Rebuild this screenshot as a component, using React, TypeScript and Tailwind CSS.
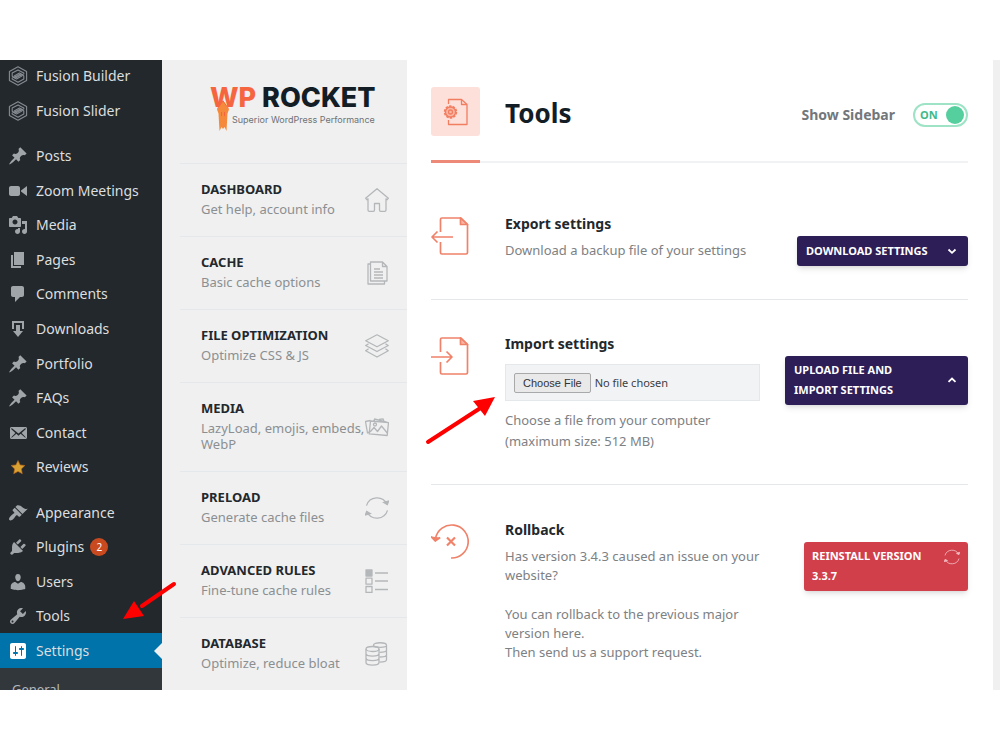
import type { ReactNode } from 'react';

const dashicons = {
  pin: 'M10.44 3.02l1.82-1.82 6.36 6.35-1.83 1.82c-1.05-.68-2.48-.57-3.41.36l-.75.75c-.92.93-1.04 2.35-.35 3.41l-1.83 1.82-2.41-2.41-2.8 2.79c-.42.42-3.38 2.71-3.8 2.29s1.86-3.39 2.28-3.81l2.79-2.79L4.1 9.36l1.83-1.82c1.05.69 2.48.57 3.4-.36l.75-.75c.93-.92 1.05-2.35.36-3.41z',
  video: 'M12 13V7c0-1.1-.9-2-2-2H3c-1.1 0-2 .9-2 2v6c0 1.1.9 2 2 2h7c1.1 0 2-.9 2-2zm1-2.5l6 4.5V5l-6 4.5v1z',
  media: 'M13 11V4c0-.55-.45-1-1-1h-1.67L9 1H5L3.67 3H2c-.55 0-1 .45-1 1v7c0 .55.45 1 1 1h10c.55 0 1-.45 1-1zM7 4.5c1.38 0 2.5 1.12 2.5 2.5S8.38 9.5 7 9.5 4.5 8.38 4.5 7 5.62 4.5 7 4.5zM14 6h5v10.5c0 1.38-1.12 2.5-2.5 2.5S14 17.88 14 16.5s1.12-2.5 2.5-2.5c.17 0 .34.02.5.05V9h-3V6zm-4 8.05V13h2v3.5c0 1.38-1.12 2.5-2.5 2.5S7 17.88 7 16.5 8.12 14 9.5 14c.17 0 .34.02.5.05z',
  page: 'M6 15V2h10v13H6zm-1 1h8v2H3V5h2v11z',
  comment: 'M5 2h9c1.1 0 2 .9 2 2v7c0 1.1-.9 2-2 2h-2l-5 5v-5H5c-1.1 0-2-.9-2-2V4c0-1.1.9-2 2-2z',
  download: 'M14.01 4v6h2V2H4v8h2.01V4h8zm-2 2v6h3l-5 6-5-6h3V6h4z',
  email: 'M19 14.5v-9c0-.83-.67-1.5-1.5-1.5H3.49c-.83 0-1.5.67-1.5 1.5v9c0 .83.67 1.5 1.5 1.5H17.5c.83 0 1.5-.67 1.5-1.5zm-1.31-9.11c.33.33.15.67-.03.84L13.6 9.95l3.9 4.06c.12.14.2.36.06.51-.13.16-.43.15-.56.05l-4.37-3.73-2.14 1.95-2.13-1.95-4.37 3.73c-.13.1-.43.11-.56-.05-.14-.15-.06-.37.06-.51l3.9-4.06-4.06-3.72c-.18-.17-.36-.51-.03-.84s.67-.17.95.07l6.24 5.04 6.25-5.04c.28-.24.62-.4.95-.07z',
  star: 'M10 3.500l2.100 4.400 4.800.6-3.500 3.400.9 4.800-4.300-2.300-4.300 2.300.9-4.800L3.100 8.500l4.800-.6z',
  appearance: 'M14.48 11.06L7.41 3.99l1.5-1.5c.5-.56 2.3-.47 3.51.32 1.21.8 1.43 1.28 2.91 2.1 1.18.64 2.45 1.26 4.45.85zm-.71.71L6.7 4.7 4.93 6.47c-.39.39-.39 1.02 0 1.41l1.06 1.06c.39.39.39 1.03 0 1.42-.6.6-1.43 1.11-2.21 1.69-.35.26-.7.53-1.01.84C1.43 14.23.4 16.08 1.4 17.07c.99 1 2.84-.03 4.18-1.36.31-.31.58-.66.85-1.02.57-.78 1.08-1.61 1.69-2.21.39-.39 1.02-.39 1.41 0l1.06 1.06c.39.39 1.02.39 1.41 0z',
  plugins: 'M13.11 4.36L9.87 7.6 8 5.73l3.24-3.24c.35-.34 1.05-.2 1.56.32.52.51.66 1.21.31 1.55zm-8 1.77l.91-1.12 9.01 9.01-1.19.84c-.71.71-2.63 1.16-3.82 1.16H6.14L4.9 17.26c-.59.59-1.54.59-2.12 0-.59-.58-.59-1.53 0-2.12l1.24-1.24v-3.88c0-1.13.4-3.19 1.09-3.89zm7.26 3.97l3.24-3.24c.34-.35 1.04-.21 1.55.31.52.51.66 1.21.31 1.55l-3.24 3.25z',
  users: 'M10 9.25c-2.27 0-2.73-3.44-2.73-3.44C7 4.02 7.82 2 9.97 2c2.16 0 2.98 2.02 2.71 3.81 0 0-.41 3.44-2.68 3.44zm0 2.57L12.72 10c2.39 0 4.52 2.33 4.52 4.53v2.49s-3.65 1.13-7.24 1.13c-3.65 0-7.24-1.13-7.24-1.13v-2.49c0-2.25 1.94-4.48 4.47-4.48z',
  tools: 'M16.68 9.77c-1.34 1.34-3.3 1.67-4.95.99l-5.41 6.52c-.99.99-2.59.99-3.58 0s-.99-2.59 0-3.57l6.52-5.42c-.68-1.65-.35-3.61.99-4.95 1.28-1.28 3.12-1.62 4.72-1.06l-2.89 2.89 2.82 2.82 2.86-2.87c.53 1.58.18 3.39-1.08 4.65zM3.81 16.21c.4.39 1.04.39 1.43 0 .4-.4.4-1.04 0-1.43-.39-.4-1.03-.4-1.43 0-.39.39-.39 1.03 0 1.43z',
  settings: 'M18 16V4c0-1.1-.9-2-2-2H4c-1.1 0-2 .9-2 2v12c0 1.1.9 2 2 2h12c1.1 0 2-.9 2-2zM8 11h1c.55 0 1 .45 1 1s-.45 1-1 1H8v1.500c0 .28-.22.5-.5.5s-.5-.22-.5-.5V13H6c-.55 0-1-.45-1-1s.45-1 1-1h1V5.500c0-.28.22-.5.5-.5s.5.22.5.5V11zm5-2h-1c-.55 0-1-.45-1-1s.45-1 1-1h1V5.500c0-.28.22-.5.5-.5s.5.22.5.5V7h1c.55 0 1 .45 1 1s-.45 1-1 1h-1v5.500c0 .28-.22.5-.5.5s-.5-.22-.5-.5V9z',
};

type AdminItem = {
  name: string;
  icon: keyof typeof dashicons | 'fusion';
  count?: number;
  active?: boolean;
};

const adminGroups: AdminItem[][] = [
  [
    { name: 'Fusion Builder', icon: 'fusion' },
    { name: 'Fusion Slider', icon: 'fusion' },
  ],
  [
    { name: 'Posts', icon: 'pin' },
    { name: 'Zoom Meetings', icon: 'video' },
    { name: 'Media', icon: 'media' },
    { name: 'Pages', icon: 'page' },
    { name: 'Comments', icon: 'comment' },
    { name: 'Downloads', icon: 'download' },
    { name: 'Portfolio', icon: 'pin' },
    { name: 'FAQs', icon: 'pin' },
    { name: 'Contact', icon: 'email' },
    { name: 'Reviews', icon: 'star' },
  ],
  [
    { name: 'Appearance', icon: 'appearance' },
    { name: 'Plugins', icon: 'plugins', count: 2 },
    { name: 'Users', icon: 'users' },
    { name: 'Tools', icon: 'tools' },
    { name: 'Settings', icon: 'settings', active: true },
  ],
];

const AdminIcon = ({ icon }: { icon: AdminItem['icon'] }) => {
  if (icon === 'fusion') {
    return (
      <svg viewBox="0 0 20 20" className="w-5 h-5 shrink-0" fill="none" stroke="#858b91" strokeWidth="1.1" strokeLinejoin="round">
        <path d="M10 .8l8.600 4.700v9L10 19.200l-8.600-4.700v-9z" />
        <path d="M15.800 8.300V7L10 3.900 4.200 7v3.200l3.300 1.700 4.800-2.700 1.500.8-5.300 3-4.300-2.200" />
        <path d="M4.200 11.800V13l5.800 3.200 5.800-3.200V9.900l-3.300-1.800-4.800 2.700-1.500-.8 5.300-3 4.300 2.200" />
      </svg>
    );
  }
  const color = icon === 'star' ? 'text-[#d9a032]' : icon === 'settings' ? 'text-white' : 'text-[#a0a5aa]';
  return (
    <svg viewBox="0 0 20 20" className={`w-5 h-5 shrink-0 ${color}`} fill="currentColor">
      <path d={dashicons[icon]} stroke={icon === 'star' ? '#b8651b' : 'none'} strokeWidth=".6" />
    </svg>
  );
};

const AdminMenu = () => (
  <nav className="w-[162px] shrink-0 bg-[#23282d] flex flex-col overflow-hidden text-sm text-[#dcdedf]">
    <div className="-mt-px flex-1 flex flex-col gap-[11px]">
      {adminGroups.map((group) => (
        <ul key={group[0].name} className="flex flex-col" style={{ flexGrow: group.length }}>
          {group.map((item) => (
            <li key={item.name} className={`flex-1 flex ${item.active ? 'bg-[#0073aa]' : ''}`}>
              <a href="#" className="relative flex-1 flex items-center gap-2 pl-2">
                <AdminIcon icon={item.icon} />
                <span>{item.name}</span>
                {item.count && (
                  <span className="-ml-[2px] w-[18px] h-[18px] rounded-full bg-[#ca4a1f] text-white text-[10px] leading-[18px] text-center">
                    {item.count}
                  </span>
                )}
                {item.active && (
                  <span className="absolute right-0 border-y-8 border-y-transparent border-r-8 border-r-[#f0f0f0]" />
                )}
              </a>
            </li>
          ))}
        </ul>
      ))}
    </div>
    <div className="h-[22px] bg-[#32373c] pl-3 pt-3 overflow-hidden">
      <a href="#" className="block text-[13px] leading-[18px] text-[#b4b9be]">General</a>
    </div>
  </nav>
);

const SyncIcon = ({ className }: { className: string }) => (
  <svg viewBox="0 0 24 24" className={className} fill="none" stroke="currentColor" strokeWidth="1.300">
    <path d="M1.500 9.600A11 11 0 0 1 22 8.200M22.500 14.400A11 11 0 0 1 2 15.800" />
    <path d="M18.700 6.500l3.600 2 1.400-3.500zM5.300 17.500l-3.600-2L.3 19z" fill="currentColor" />
  </svg>
);

const OutlineIcon = ({ children }: { children: ReactNode }) => (
  <svg viewBox="0 0 24 24" className="w-6 h-6" fill="none" stroke="currentColor" strokeWidth="1.300" strokeLinejoin="round">
    {children}
  </svg>
);

const rocketItems = [
  {
    title: 'DASHBOARD',
    text: 'Get help, account info',
    icon: (
      <OutlineIcon>
        <path d="M12 .7L.6 10.200l1.200 1.500 1.200-.9V22c0 .8.500 1.300 1.300 1.300h4c.8 0 1.200-.4 1.200-1.200v-6.600h5v6.600c0 .8.4 1.200 1.200 1.200h4c.8 0 1.300-.5 1.300-1.300V10.800l1.200.9 1.200-1.500z" />
      </OutlineIcon>
    ),
  },
  {
    title: 'CACHE',
    text: 'Basic cache options',
    icon: (
      <OutlineIcon>
        <path d="M5.500 1h12l4.500 4.500V20H5.500zM17.500 1v4.500H22M5.500 3H3v20h16.500v-3M9 8h6M9 11h9M9 14h9M9 17h9" />
      </OutlineIcon>
    ),
  },
  {
    title: 'FILE OPTIMIZATION',
    text: 'Optimize CSS & JS',
    icon: (
      <OutlineIcon>
        <path d="M12 .8l11.300 6L12 12.800.7 6.800zM3.600 9.800L.7 11.500 12 17.500l11.300-6-2.900-1.700M3.600 14.800L.7 16.800 12 23l11.300-6.200-2.900-2" />
      </OutlineIcon>
    ),
  },
  {
    title: 'MEDIA',
    text: 'LazyLoad, emojis, embeds, WebP',
    icon: (
      <OutlineIcon>
        <path d="M5.500 6l18 1.600-1.300 12.900-18-1.600zM4.700 16.500L2.500 18 .5 6.500l5-1M9 6l.6-2 13 3.500M14 4.500l4-.7 1 2.700" />
        <path d="M5 17l4-4.500 3.500 4 4-5.500 5.800 7" />
        <circle cx="10" cy="9.500" r="1.500" />
      </OutlineIcon>
    ),
  },
  {
    title: 'PRELOAD',
    text: 'Generate cache files',
    icon: <SyncIcon className="w-6 h-6" />,
  },
  {
    title: 'ADVANCED RULES',
    text: 'Fine-tune cache rules',
    icon: (
      <OutlineIcon>
        <path d="M1 1h6v6H1z" fill="currentColor" />
        <path d="M1 9.200h6v6H1zM1 17.500h6v6H1zM10 4h13M10 12h13M10 20.500h13" />
      </OutlineIcon>
    ),
  },
  {
    title: 'DATABASE',
    text: 'Optimize, reduce bloat',
    icon: (
      <OutlineIcon>
        <ellipse cx="7.500" cy="7" rx="6.500" ry="2.500" />
        <path d="M1 7v13.500c0 3.400 13 3.400 13 0V7M1 11.500c0 3.400 13 3.400 13 0M1 16c0 3.400 13 3.400 13 0" />
        <path d="M8.500 4.300V3.200c0-3.300 13-3.300 13 0v14.500c0 1.200-3 2.300-7 2.400M8.500 3.500c1 2.400 13 2.400 13 0M14.500 10.300c4 0 7-1 7-2.300M14.500 15c4 0 7-1 7-2.300" />
      </OutlineIcon>
    ),
  },
];

const RocketSidebar = () => (
  <aside className="w-[245px] shrink-0 bg-[#f0f0f0] pl-[18px] overflow-hidden">
    <div className="h-[103px] pl-[30px] pt-[22px]">
      <div className="relative font-[Inter,sans-serif]">
        <div className="text-[27px] leading-8 font-extrabold text-[#121d26] whitespace-nowrap">
          <span className="text-[#f56640]">WP</span> ROCKET
        </div>
        <div className="pl-[22px] text-[9px] leading-3 text-[#6f7275] whitespace-nowrap">
          Superior WordPress Performance
        </div>
        <svg viewBox="0 0 14 32" className="absolute left-[6px] top-[18px] w-[14px] h-8">
          <path d="M7 0L2.500 7.500 1 9.500l1.500 4L3.500 31l2-4L7 29l1.500-2 2 4 1-17.500 1.500-4-1.500-2z" fill="#f58a3c" />
          <path d="M1.500 8.500L7 1l5.500 7.500M5.500 12v4M8.500 12v4" fill="none" stroke="#f56640" strokeWidth="1" />
        </svg>
      </div>
    </div>
    <ul>
      {rocketItems.map((item) => (
        <li key={item.title} className="border-t border-[#e4e8ea]">
          <a href="#" className="flex items-center justify-between pl-[21px] pr-[18px] pt-[15px] pb-[19px]">
            <span className="w-[164px]">
              <span className="block text-[13px] leading-5 font-bold text-[#23282d] whitespace-nowrap">{item.title}</span>
              <span className="block pt-[2px] text-[13px] leading-4 text-[#8b8f92]">{item.text}</span>
            </span>
            <span className="shrink-0 pt-1 text-[#b4b7b9]">{item.icon}</span>
          </a>
        </li>
      ))}
    </ul>
  </aside>
);

const DocumentIcon = ({ direction }: { direction: 'out' | 'in' }) => (
  <svg viewBox="0 0 38 38" className="w-[38px] h-[38px] shrink-0" fill="none" stroke="#f0826a" strokeWidth="1.700" strokeLinejoin="round">
    <path d="M9.500 15V2.500c0-1 .5-1.500 1.500-1.500h19l6.500 6.500V35.500c0 1-.5 1.500-1.500 1.500H11c-1 0-1.500-.5-1.500-1.500V25" />
    <path d="M29.500 1v6.500h7z" fill="#f9b8a6" />
    {direction === 'out' ? <path d="M22 20H1M6.500 14.500L1 20l5.500 5.500" /> : <path d="M0 20h21M15.500 14.500L21 20l-5.500 5.500" />}
  </svg>
);

const ToolsIcon = () => (
  <svg viewBox="0 0 26 28" className="w-[26px] h-7" fill="none" stroke="#f27e62" strokeWidth="1.300" strokeLinejoin="round">
    <path d="M5.500 6V1.500h13L24 6.500V26.500H5.500V22" />
    <path d="M18.500 1.500v5H24" />
    <circle cx="7.500" cy="14" r="5.800" fill="#f9b8a6" strokeWidth="1.800" strokeDasharray="2.400 1.200" />
    <circle cx="7.500" cy="14" r="5" />
    <circle cx="7.500" cy="14" r="2" />
  </svg>
);

const RollbackIcon = () => (
  <svg viewBox="0 0 38 38" className="w-[38px] h-[38px] shrink-0" fill="none" stroke="#f0826a" strokeWidth="1.700">
    <path d="M4.500 15.500A16.500 16.500 0 1 1 20 35" />
    <path d="M0 13.500l4.200 4.500 5-3.500" fill="#f0826a" strokeLinejoin="round" />
    <path d="M16 14.500l8 8M24 14.500l-8 8" strokeWidth="2.200" />
  </svg>
);

const Chevron = ({ up }: { up?: boolean }) => (
  <svg viewBox="0 0 10 10" className="w-[10px] h-[10px] shrink-0" fill="none" stroke="currentColor" strokeWidth="1.800">
    <path d={up ? 'M1.500 6.800L5 3.500l3.500 3.300' : 'M1.500 3.500L5 6.800l3.500-3.300'} />
  </svg>
);

const buttonClass =
  'shrink-0 flex justify-between rounded-[3px] text-left text-[11px] font-bold text-white shadow-md';

const ToolsPage = () => (
  <main className="flex-1 min-w-0 bg-white pl-6 pr-[25px] overflow-hidden">
    <header className="relative flex items-start border-b-2 border-[#f0f2f3] pt-[27px] pb-[25px]">
      <div className="w-[49px] h-[49px] rounded-[3px] bg-[#fde0da] flex items-center justify-center">
        <ToolsIcon />
      </div>
      <h1 className="flex-1 pl-[25px] pt-2 text-[26px] leading-9 font-bold text-[#121d26]">Tools</h1>
      <label className="flex items-center pt-4 text-sm leading-6 font-bold text-[#72777c]">
        Show Sidebar
        <input type="checkbox" defaultChecked className="peer sr-only" />
        <span className="ml-[18px] w-[55px] h-6 rounded-full border-2 border-[#9fe3c6] flex items-center justify-between pl-[5px] pr-[2px] text-[11px] text-[#3fb98a]">
          ON
          <span className="w-[18px] h-[18px] rounded-full bg-[#56cf9e]" />
        </span>
      </label>
      <span className="absolute left-0 -bottom-[2px] w-[49px] h-[3px] bg-[#ec8a77]" />
    </header>

    <section className="flex items-start border-b border-[#e4e8ea] pt-[51px] pb-[33px]">
      <div className="pt-[3px]">
        <DocumentIcon direction="out" />
      </div>
      <div className="flex-1 pl-9">
        <h2 className="text-sm leading-5 font-bold text-[#23282d]">Export settings</h2>
        <p className="pt-[6px] text-[13px] leading-5 text-[#7d8184]">Download a backup file of your settings</p>
      </div>
      <div className="pt-[22px]">
        <button className={`${buttonClass} w-[171px] h-[30px] items-center pl-[9px] pr-[11px] bg-[#2d1e58]`}>
          DOWNLOAD SETTINGS
          <Chevron />
        </button>
      </div>
    </section>

    <section className="flex items-start border-b border-[#e4e8ea] pt-[34px] pb-8">
      <div className="pt-[3px]">
        <DocumentIcon direction="in" />
      </div>
      <div className="flex-1 pl-9">
        <h2 className="text-sm leading-5 font-bold text-[#23282d]">Import settings</h2>
        <input
          id="import-file"
          type="file"
          className="mt-[10px] block w-full h-[37px] border border-[#e5e8ea] bg-[#f2f3f5] px-2 py-2 text-[11px] leading-5 text-[#3c4043] file:mr-1 file:h-5 file:rounded-[2px] file:border file:border-solid file:border-[#a9a9a9] file:bg-[#e9e9e9] file:px-2 file:font-[Liberation_Sans,sans-serif] file:text-[11px] file:leading-4 file:text-[#333]"
        />
        <label htmlFor="import-file" className="block pt-[9px] text-[13px] leading-[21px] text-[#7d8184]">
          Choose a file from your computer
          <br />
          (maximum size: 512 MB)
        </label>
      </div>
      <div className="pl-[25px] pt-[22px]">
        <button className={`${buttonClass} w-[183px] items-center pl-[9px] pr-[11px] pt-1 pb-[5px] leading-5 bg-[#2d1e58]`}>
          <span>
            UPLOAD FILE AND
            <br />
            IMPORT SETTINGS
          </span>
          <Chevron up />
        </button>
      </div>
    </section>

    <section className="flex items-start pt-[35px]">
      <div className="pt-[3px]">
        <RollbackIcon />
      </div>
      <div className="flex-1 pl-9 pr-8">
        <h2 className="text-sm leading-5 font-bold text-[#23282d]">Rollback</h2>
        <div className="pt-[7px] text-[13px] leading-[19px] text-[#7d8184]">
          <p>Has version 3.4.3 caused an issue on your website?</p>
          <p className="pt-5">You can rollback to the previous major version here.</p>
          <p>Then send us a support request.</p>
        </div>
      </div>
      <div className="pt-[22px]">
        <button className={`${buttonClass} w-[164px] items-start pl-2 pr-2 pt-1 pb-[5px] leading-5 bg-[#d13f4b]`}>
          <span>
            REINSTALL VERSION
            <br />
            3.3.7
          </span>
          <SyncIcon className="mt-[3px] w-4 h-4 shrink-0 text-[#f0b9be]" />
        </button>
      </div>
    </section>
  </main>
);

// Red callout arrows drawn over the page
const Callouts = () => (
  <>
    <svg viewBox="0 0 56 42" className="absolute left-[122px] top-[580px] w-14 h-[42px]" fill="#fe0000">
      <path d="M52 4L20 26" stroke="#fe0000" strokeWidth="4" strokeLinecap="round" />
      <path d="M1 39L12 21l10 15z" />
    </svg>
    <svg viewBox="0 0 74 52" className="absolute left-[424px] top-[395px] w-[74px] h-[52px]" fill="#fe0000">
      <path d="M4 47L58 12" stroke="#fe0000" strokeWidth="4" strokeLinecap="round" />
      <path d="M71 2L49 6l12 15z" />
    </svg>
  </>
);

const App = () => {
  return (
    <div className="relative h-screen bg-white py-[60px] font-[Noto_Sans,sans-serif]">
      <div className="flex h-full overflow-hidden">
        <AdminMenu />
        <RocketSidebar />
        <ToolsPage />
        <div className="w-[7px] shrink-0 bg-[#f0f0f0]" />
      </div>
      <Callouts />
    </div>
  );
};

export default App;
